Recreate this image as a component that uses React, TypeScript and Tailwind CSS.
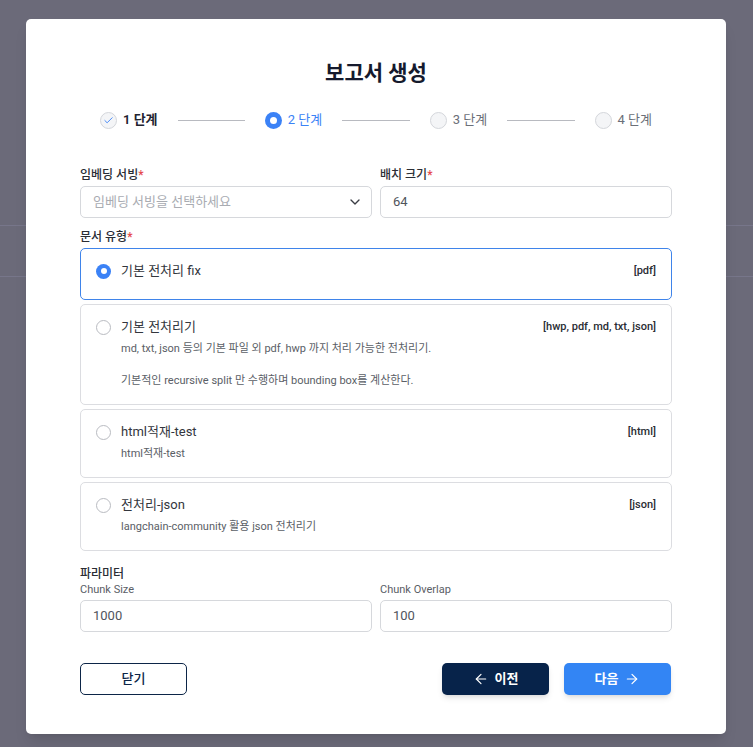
import { ArrowLeft, ArrowRight, Check, ChevronDown } from "lucide-react";

type DocType = {
  name: string;
  exts: string;
  desc?: string;
};

const docTypes: DocType[] = [
  { name: "기본 전처리 fix", exts: "[pdf]" },
  {
    name: "기본 전처리기",
    exts: "[hwp, pdf, md, txt, json]",
    desc: "md, txt, json 등의 기본 파일 외 pdf, hwp 까지 처리 가능한 전처리기.\n\n기본적인 recursive split 만 수행하며 bounding box를 계산한다.",
  },
  { name: "html적재-test", exts: "[html]", desc: "html적재-test" },
  { name: "전처리-json", exts: "[json]", desc: "langchain-community 활용 json 전처리기" },
];

const steps = ["1 단계", "2 단계", "3 단계", "4 단계"];

function StepDot({ index }: { index: number }) {
  if (index === 0) {
    return (
      <span className="flex h-[17px] w-[17px] items-center justify-center rounded-full border border-[#d4d6db] bg-[#f4f5f7] text-[#3b82f6]">
        <Check size={11} strokeWidth={2} />
      </span>
    );
  }
  if (index === 1) {
    return (
      <span className="flex h-[17px] w-[17px] items-center justify-center rounded-full bg-[#3b82f6]">
        <span className="h-[7px] w-[7px] rounded-full bg-white" />
      </span>
    );
  }
  return <span className="h-[17px] w-[17px] rounded-full border border-[#d4d6db] bg-[#f4f5f7]" />;
}

function Stepper() {
  return (
    <div className="mt-[23px] flex items-center px-5">
      {steps.map((label, i) => (
        <div key={label} className={i < steps.length - 1 ? "flex flex-1 items-center" : "flex items-center"}>
          <div className="flex h-5 items-center gap-[6px]">
            <StepDot index={i} />
            <span
              className={
                i === 0
                  ? "text-[13px] font-semibold text-[#1f2330]"
                  : i === 1
                    ? "text-[13px] text-[#3b82f6]"
                    : "text-[13px] text-[#6b6f78]"
              }
            >
              {label}
            </span>
          </div>
          {i < steps.length - 1 && <div className="mx-5 h-px flex-1 bg-[#b8bac0]" />}
        </div>
      ))}
    </div>
  );
}

function Label({ text, required }: { text: string; required?: boolean }) {
  return (
    <p className="mb-[3px] text-[12px] font-medium leading-4 text-[#2a2d34]">
      {text}
      {required && <span className="text-[#e5484d]">*</span>}
    </p>
  );
}

function DocCard({ doc, selected }: { doc: DocType; selected: boolean }) {
  return (
    <div
      className={
        selected
          ? "min-h-[52px] rounded-[5px] border border-[#3f84ea] px-[15px] pt-3 pb-[15px]"
          : "min-h-[52px] rounded-[5px] border border-[#dcdde1] px-[15px] pt-3 pb-[15px]"
      }
    >
      <div className="flex h-5 items-center">
        {selected ? (
          <span className="flex h-[15px] w-[15px] items-center justify-center rounded-full bg-[#3b82f6]">
            <span className="h-[6px] w-[6px] rounded-full bg-white" />
          </span>
        ) : (
          <span className="h-[15px] w-[15px] rounded-full border border-[#b9bbc1] bg-white" />
        )}
        <span className="ml-[10px] flex-1 text-[13px] text-[#33363d]">{doc.name}</span>
        <span className="text-[11px] font-medium text-[#2a2d34]">{doc.exts}</span>
      </div>
      {doc.desc && (
        <p className="mt-1 pl-[25px] text-[11px] leading-4 whitespace-pre-line text-[#5a5e66]">{doc.desc}</p>
      )}
    </div>
  );
}

export default function App() {
  return (
    <div
      className="relative h-[747px] overflow-hidden bg-[#6b6a79]"
      style={{ fontFamily: 'Roboto, "Noto Sans CJK KR", sans-serif' }}
    >
      {/* underlying page */}
      <div className="h-[225px]" />
      <div className="h-[52px] border-y border-[#77768a]" />

      <div className="absolute inset-0 flex justify-start pt-[19px] pl-[26px]">
        <div className="h-[715px] w-[700px] rounded-[5px] bg-white px-[54px] pt-10 pb-[39px] shadow-lg">
          <h1 className="text-center text-[21px] font-bold leading-7 text-[#151a2d]">보고서 생성</h1>

          <Stepper />

          <div className="mt-[37px] grid grid-cols-2 gap-2">
            <div>
              <Label text="임베딩 서빙" required />
              <div className="flex h-8 items-center justify-between rounded-[5px] border border-[#d6d8dc] pl-3 pr-2">
                <span className="text-[13px] text-[#a9acb2]">임베딩 서빙을 선택하세요</span>
                <ChevronDown size={16} strokeWidth={2} className="text-[#3a3d44]" />
              </div>
            </div>
            <div>
              <Label text="배치 크기" required />
              <div className="flex h-8 items-center rounded-[5px] border border-[#d6d8dc] px-3">
                <span className="text-[13px] text-[#50545c]">64</span>
              </div>
            </div>
          </div>

          <div className="mt-[11px]">
            <Label text="문서 유형" required />
            <div className="flex flex-col gap-1">
              {docTypes.map((doc, i) => (
                <DocCard key={doc.name} doc={doc} selected={i === 0} />
              ))}
            </div>
          </div>

          <div className="mt-[15px]">
            <p className="text-[12px] font-medium leading-4 text-[#2a2d34]">파라미터</p>
            <div className="grid grid-cols-2 gap-2">
              <div>
                <p className="mb-[2px] text-[11px] leading-4 text-[#5a5e66]">Chunk Size</p>
                <div className="flex h-8 items-center rounded-[5px] border border-[#d6d8dc] px-3">
                  <span className="text-[13px] text-[#50545c]">1000</span>
                </div>
              </div>
              <div>
                <p className="mb-[2px] text-[11px] leading-4 text-[#5a5e66]">Chunk Overlap</p>
                <div className="flex h-8 items-center rounded-[5px] border border-[#d6d8dc] px-3">
                  <span className="text-[13px] text-[#50545c]">100</span>
                </div>
              </div>
            </div>
          </div>

          <div className="mt-[31px] flex items-center justify-between">
            <button className="h-8 w-[107px] rounded-[5px] border border-[#0c2547] text-[13px] font-medium text-[#0c2547]">
              닫기
            </button>
            <div className="flex gap-[15px] pr-px">
              <button className="flex h-8 w-[107px] items-center justify-center gap-[6px] rounded-[5px] bg-[#07234a] text-[13px] font-semibold text-white shadow-md">
                <ArrowLeft size={16} strokeWidth={1.8} />
                이전
              </button>
              <button className="flex h-8 w-[107px] items-center justify-center gap-[6px] rounded-[5px] bg-[#3385f4] text-[13px] font-semibold text-white shadow-md">
                다음
                <ArrowRight size={16} strokeWidth={1.8} />
              </button>
            </div>
          </div>
        </div>
      </div>
    </div>
  );
}
